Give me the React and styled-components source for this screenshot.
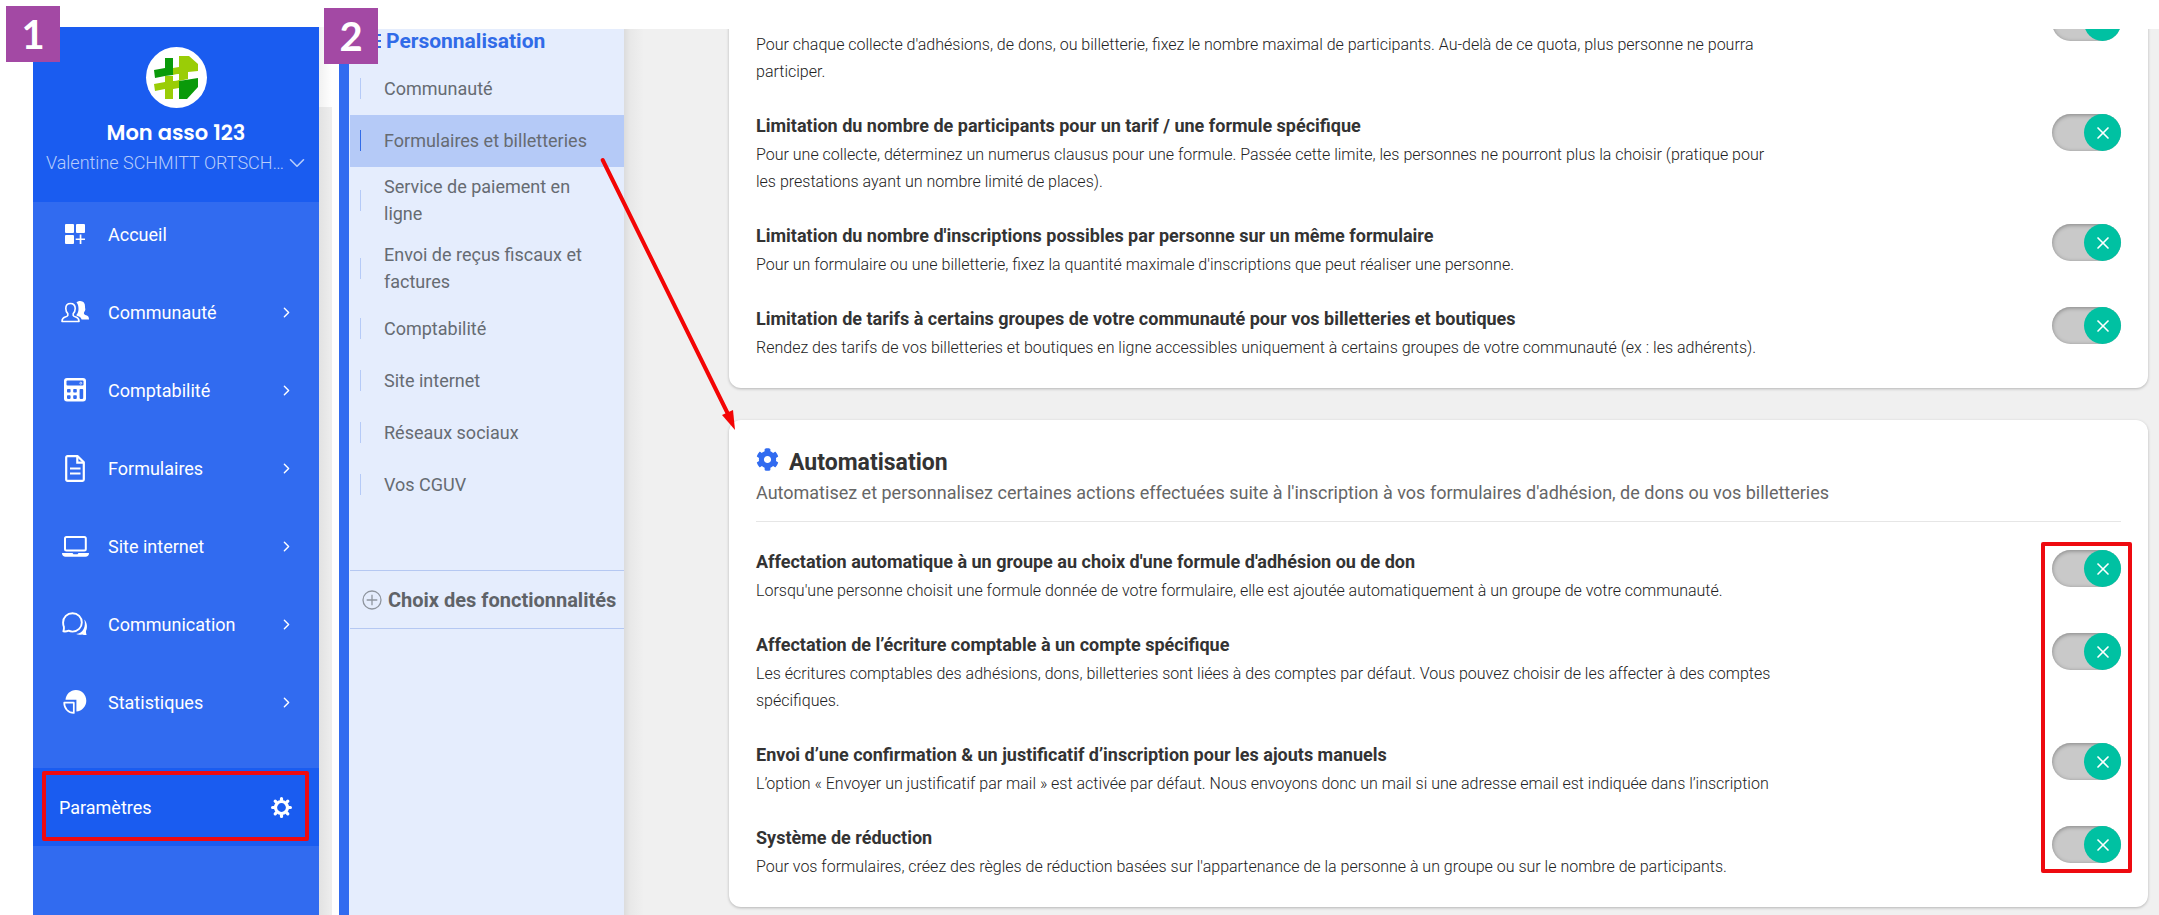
import { useState } from "react";
import styled, { createGlobalStyle } from "styled-components";
import { FaCog } from "react-icons/fa";
import { ChevronDown, ChevronRight, X } from "lucide-react";

const GlobalStyle = createGlobalStyle`
  * {
    box-sizing: border-box;
  }

  body {
    margin: 0;
    background: #fff;
    font-family: Roboto, "Liberation Sans", sans-serif;
    color: #333;
  }

  h1, h2, h3, p, ul {
    margin: 0;
    padding: 0;
  }

  button {
    border: 0;
    background: none;
    font-family: inherit;
    cursor: pointer;
  }
`;

const Page = styled.div`
  position: relative;
  display: flex;
  height: 100vh;
  padding-left: 33px;
  overflow: hidden;
`;

const StepBadge = styled.div`
  position: absolute;
  z-index: 3;
  top: ${(props) => props.$top}px;
  left: ${(props) => props.$left}px;
  display: flex;
  align-items: center;
  justify-content: center;
  width: 54px;
  height: 56px;
  background: #a349a4;
  color: #fff;
  font-family: Lato, "Noto Sans", sans-serif;
  font-size: 40px;
  font-weight: 700;
  line-height: 56px;
`;

const ArrowDrawing = styled.svg`
  position: absolute;
  z-index: 3;
  top: 150px;
  left: 590px;
  pointer-events: none;
`;

/* main menu */

const Sidebar = styled.nav`
  flex: none;
  width: 286px;
  margin-top: 27px;
  background: #316bf0;
`;

const SidebarHeader = styled.header`
  display: flex;
  flex-direction: column;
  align-items: center;
  padding: 20px 12px 25px;
  background: #1a5cf0;
`;

const Avatar = styled.div`
  display: flex;
  width: 61px;
  height: 61px;
  border-radius: 50%;
  background: #fff;
`;

const AssoName = styled.h1`
  margin-top: 10px;
  color: #fff;
  font-family: Poppins, Inter, sans-serif;
  font-size: 21px;
  font-weight: 600;
  line-height: 30px;
`;

const UserButton = styled.button`
  display: flex;
  align-items: center;
  padding: 0 0 0 4px;
  color: #b8cdfb;
  font-size: 18px;
  font-weight: 300;
  line-height: 29px;
  white-space: nowrap;
`;

const MenuList = styled.ul`
  display: flex;
  flex-direction: column;
  gap: 14px;
  list-style: none;
`;

const MenuLink = styled.a`
  display: flex;
  align-items: center;
  height: 64px;
  padding: 0 24px 0 26px;
  color: #fff;
  font-size: 18px;
  text-decoration: none;
`;

const MenuIcon = styled.span`
  display: flex;
  align-items: center;
  justify-content: center;
  width: 32px;
  margin-right: 17px;
`;

const MenuLabel = styled.span`
  flex: 1;
`;

const SettingsLink = styled.a`
  position: relative;
  display: flex;
  align-items: center;
  justify-content: space-between;
  height: 78px;
  margin-top: 34px;
  padding: 0 27px 0 26px;
  background: #1a5cf0;
  color: #fff;
  font-size: 18px;
  text-decoration: none;
`;

const SettingsFrame = styled.span`
  position: absolute;
  top: 3px;
  right: 10px;
  bottom: 5px;
  left: 9px;
  border: 4px solid #ee0a10;
  border-radius: 2px;
`;

const PageEdge = styled.div`
  display: flex;
  flex: none;
  flex-direction: column;
  width: 13px;
  margin: 27px 7px 0 0;
  background: linear-gradient(to right, #e2e2e2, #eee);
`;

const PageEdgeTop = styled.div`
  height: 80px;
  background: linear-gradient(to right, #f1f1f1, #fff);
`;

/* settings screen */

const Settings = styled.div`
  display: flex;
  flex: 1;
  min-width: 0;
  margin-top: 29px;
  border-left: 10px solid #316bf0;
  background: #f0f0f0;
`;

const Submenu = styled.nav`
  flex: none;
  width: 275px;
  background: #e5edfd;
`;

const SubmenuTitle = styled.h2`
  display: flex;
  align-items: center;
  gap: 5px;
  margin-bottom: 10px;
  padding-left: 12px;
  color: #316be8;
  font-size: 21px;
  font-weight: 700;
  line-height: 24px;
`;

const SubmenuList = styled.ul`
  list-style: none;
`;

const SubmenuLink = styled.a`
  display: flex;
  align-items: center;
  min-height: 52px;
  margin-left: 1px;
  padding: 6px 24px 8px 10px;
  background: ${(props) => (props.$active ? "#b5caf7" : "transparent")};
  color: #666b72;
  font-size: 18px;
  line-height: 27px;
  text-decoration: none;

  &::before {
    content: "";
    flex: none;
    width: 1px;
    height: 21px;
    margin-right: 23px;
    background: ${(props) => (props.$active ? "#316be8" : "#b5caf7")};
  }
`;

const FeaturesLink = styled.a`
  display: flex;
  align-items: center;
  gap: 6px;
  height: 59px;
  margin: 59px 0 0 1px;
  padding-left: 12px;
  border-top: 1px solid #b5c8f2;
  border-bottom: 1px solid #b5c8f2;
  color: #5f6368;
  font-size: 20px;
  font-weight: 700;
  text-decoration: none;
  white-space: nowrap;
`;

const Content = styled.main`
  display: flex;
  flex: 1;
  flex-direction: column;
  justify-content: flex-end;
  gap: 32px;
  min-width: 0;
  padding: 0 11px 8px 105px;
  overflow: hidden;
  background: linear-gradient(to right, #dcdcdc, #e8e8e8 6px, #f0f0f0 20px);
`;

const Card = styled.section`
  flex: none;
  padding: 28px 27px 27px;
  border-radius: 12px;
  background: #fff;
  box-shadow: 0 1px 3px rgba(0, 0, 0, 0.25);
`;

const CardHeader = styled.header`
  margin-bottom: 26px;
  padding-bottom: 14px;
  border-bottom: 1px solid #e6e6e6;
`;

const CardTitle = styled.h2`
  display: flex;
  align-items: flex-start;
  gap: 10px;
  font-size: 23px;
  font-weight: 700;
  line-height: 30px;

  svg {
    color: #316bf0;
  }
`;

const CardIntro = styled.p`
  margin-top: 1px;
  color: #666;
  font-size: 18px;
  line-height: 28px;
`;

const OptionList = styled.div`
  position: relative;
  display: flex;
  flex-direction: column;
  gap: 27px;
`;

const OptionFrame = styled.div`
  position: absolute;
  top: -6px;
  right: -11px;
  bottom: 7px;
  width: 91px;
  border: 4px solid #ee0a10;
  border-radius: 2px;
  pointer-events: none;
`;

const OptionRow = styled.div`
  display: flex;
  align-items: flex-start;
  justify-content: space-between;
`;

const OptionText = styled.div`
  width: 75%;
  padding-top: ${(props) => (props.$untitled ? "28px" : "0")};
`;

const OptionTitle = styled.label`
  display: block;
  font-size: 18px;
  font-weight: 700;
  line-height: 28px;
`;

const OptionDescription = styled.p`
  margin-top: 1px;
  color: #222;
  font-size: 16px;
  font-weight: 300;
  line-height: 27px;
`;

const Toggle = styled.span`
  position: relative;
  display: flex;
  width: 69px;
  height: 37px;
  margin-top: 2px;
`;

const ToggleInput = styled.input`
  appearance: none;
  width: 100%;
  height: 100%;
  margin: 0;
  border-radius: 19px;
  background: #c9c9c9;
  box-shadow: inset 0 1px 4px rgba(0, 0, 0, 0.35);
  cursor: pointer;
`;

const ToggleKnob = styled.span`
  position: absolute;
  top: 0;
  left: ${(props) => (props.$on ? "32px" : "0")};
  display: flex;
  align-items: center;
  justify-content: center;
  width: 37px;
  height: 37px;
  border-radius: 50%;
  background: #00c1a2;
  color: #fff;
  pointer-events: none;
`;

const LogoDrawing = () => (
  <svg width="61" height="61" viewBox="0 0 61 61" aria-hidden="true">
    <path fill="#9acd06" d="M8 37l11-2v-6h8v5l6-1v-6l-6 1v-7l6-1V9h10l9 8v7l-10 1v7l-9 2v7l-6 1v10h-8V42l-10 2z" />
    <path fill="#0a9a0a" d="M19 11h8v17l-8 1-10 2-1-8 11-2z" />
    <path fill="#fff" d="M27 28l6-1v6l-6 1z" />
    <path fill="#0a9a0a" d="M33 34l19-3v9L41 52h-8z" />
  </svg>
);

const HomeIcon = () => (
  <svg width="20" height="20" viewBox="0 0 20 20" fill="#fff">
    <rect width="9" height="9" rx="1" />
    <rect x="11" width="9" height="9" rx="1" />
    <rect y="11" width="9" height="9" rx="1" />
    <path d="M14.7 10.5h1.7v4h4v1.6h-4v4h-1.7v-4h-4v-1.6h4z" />
  </svg>
);

const PeopleIcon = () => (
  <svg width="28" height="22" viewBox="0 0 28 22">
    <path
      fill="none"
      stroke="#fff"
      strokeWidth="1.6"
      strokeLinejoin="round"
      d="M9.500 2.500C6.500 2.500 4.800 4.600 4.800 7.400c0 2.300.8 4 2 5.200v1.900c-.4.900-1.500 1.200-2.700 1.600C2 16.800 1 17.600 1 20.500h17c0-2.900-1-3.700-3.100-4.400-1.200-.4-2.300-.7-2.700-1.600v-1.900c1.200-1.200 2-2.900 2-5.200 0-2.800-1.700-4.900-4.700-4.900z"
    />
    <path
      fill="#fff"
      d="M15.500 1.500C16.500.6 17.800 0 19.300.1c3.200.2 4.800 2.300 4.700 5.100-.1 2.300.8 2.700.1 4.400-.4 1-1.200 1.700-1.200 2.700 0 1.300 1.100 1.600 2.200 2 1.900.7 2.900 1.300 2.900 4.200h-7.400c-.4-1.700-1.500-2.700-3.300-3.300-1.400-.4-2-.8-2-1.200 1.500-1.600 2.200-3.600 2.200-6 0-2.800-.5-5-2-6.500z"
    />
  </svg>
);

const CalculatorIcon = () => (
  <svg width="22" height="24" viewBox="0 0 22 24">
    <rect width="22" height="23.500" rx="3" fill="#fff" />
    <g fill="#316bf0">
      <rect x="2.500" y="2.500" width="17" height="5" rx="1" />
      <rect x="3" y="11" width="3.600" height="3.600" rx=".8" />
      <rect x="9.200" y="11" width="3.600" height="3.600" rx=".8" />
      <rect x="3" y="17.300" width="3.600" height="3.600" rx=".8" />
      <rect x="9.200" y="17.300" width="3.600" height="3.600" rx=".8" />
      <rect x="15.600" y="11" width="3.600" height="9.900" rx=".8" />
    </g>
    <circle cx="16.800" cy="5.200" r="1" fill="none" stroke="#fff" strokeWidth=".7" />
  </svg>
);

const FileIcon = () => (
  <svg width="20" height="27" viewBox="0 0 20 27" fill="none" stroke="#fff" strokeWidth="2.200">
    <path strokeLinejoin="round" d="M1.200 2.500c0-.8.500-1.300 1.300-1.300h10.200l6.100 6.100v17.200c0 .8-.5 1.300-1.300 1.300h-15c-.8 0-1.300-.5-1.300-1.300z" />
    <path d="M12.300 1v6.700h6.500M5 13.500h10.500M5 18.500h10.500" />
  </svg>
);

const LaptopIcon = () => (
  <svg width="27" height="21" viewBox="0 0 27 21">
    <rect x="3" y="1" width="20.800" height="13.500" rx="1.500" fill="none" stroke="#fff" strokeWidth="2" />
    <path fill="#fff" d="M0 17h10.500l1 1.300h4l1-1.300H27c0 2.500-1.500 3.800-3.500 3.800h-20C1.500 20.800 0 19.500 0 17z" />
  </svg>
);

const ChatIcon = () => (
  <svg width="26" height="24" viewBox="0 0 26 24">
    <path
      fill="none"
      stroke="#fff"
      strokeWidth="1.900"
      strokeLinejoin="round"
      d="M10.500 1.200c5.300 0 9.300 4.100 9.300 9.200s-4 9.200-9.300 9.200c-1.900 0-3-.4-3.900-.9-1.500.7-3.200 1-5.200.7.500-1.600.7-2.800.5-4.500-.5-1.300-.8-2.600-.8-4.500 0-5.100 4.100-9.200 9.400-9.200z"
    />
    <path fill="#fff" d="M22.300 7.500c3 3.300 3.300 8 1.700 11.500-.1 1.500.1 2.700.6 4.100-1.700.1-3-.1-4.500-.7-2 .6-4 .6-6-.3 3.500-.4 6.100-2.200 7.500-5 1.400-2.900 1.700-6 .7-9.600z" />
  </svg>
);

const StatsIcon = () => (
  <svg width="24" height="24" viewBox="0 0 24 24">
    <path fill="#fff" d="M2.500 9.800C3 4.300 7.300 0 12.900 0 18.700 0 23.300 4.700 23.300 10.800c0 5.700-4.300 10.300-9.900 10.800V9.800z" />
    <path fill="none" stroke="#fff" strokeWidth="1.700" strokeLinejoin="round" d="M1.200 12.700h9.600v10.200c-5.400 0-9.600-4.400-9.600-10.200z" />
  </svg>
);

const SettingsIcon = () => (
  <svg width="21" height="21" viewBox="0 0 21 21" stroke="#fff" fill="none">
    <circle cx="10.500" cy="10.500" r="6" strokeWidth="3.200" />
    <g strokeWidth="3.200" strokeLinecap="round">
      <path d="M10.500 1.600v2M10.500 17.400v2M1.600 10.500h2M17.400 10.500h2M4.200 4.200l1 1M15.800 15.800l1 1M4.200 16.800l1-1M15.800 5.200l1-1" />
    </g>
  </svg>
);

const ListIcon = () => (
  <svg width="20" height="18" viewBox="0 0 20 18" fill="#316be8">
    <path d="M0 1h3v3H0zM6 2h14v2H6zM0 7h3v3H0zM6 8h14v2H6zM0 13h3v3H0zM6 14h14v2H6z" />
  </svg>
);

const PlusIcon = () => (
  <svg width="20" height="20" viewBox="0 0 20 20" fill="none" stroke="#8f959e" strokeWidth="1.300">
    <circle cx="10" cy="10" r="9" />
    <path d="M10 4.700v10.600M4.700 10h10.600" />
  </svg>
);

const menuItems = [
  { label: "Accueil", icon: <HomeIcon /> },
  { label: "Communauté", icon: <PeopleIcon />, more: true },
  { label: "Comptabilité", icon: <CalculatorIcon />, more: true },
  { label: "Formulaires", icon: <FileIcon />, more: true },
  { label: "Site internet", icon: <LaptopIcon />, more: true },
  { label: "Communication", icon: <ChatIcon />, more: true },
  { label: "Statistiques", icon: <StatsIcon />, more: true },
];

const submenuItems = [
  "Communauté",
  "Formulaires et billetteries",
  "Service de paiement en ligne",
  "Envoi de reçus fiscaux et factures",
  "Comptabilité",
  "Site internet",
  "Réseaux sociaux",
  "Vos CGUV",
];

const limitOptions = [
  {
    id: "quota",
    text: "Pour chaque collecte d'adhésions, de dons, ou billetterie, fixez le nombre maximal de participants. Au-delà de ce quota, plus personne ne pourra participer.",
  },
  {
    id: "quota-tarif",
    title: "Limitation du nombre de participants pour un tarif / une formule spécifique",
    text: "Pour une collecte, déterminez un numerus clausus pour une formule. Passée cette limite, les personnes ne pourront plus la choisir (pratique pour les prestations ayant un nombre limité de places).",
  },
  {
    id: "quota-personne",
    title: "Limitation du nombre d'inscriptions possibles par personne sur un même formulaire",
    text: "Pour un formulaire ou une billetterie, fixez la quantité maximale d'inscriptions que peut réaliser une personne.",
  },
  {
    id: "tarif-groupe",
    title: "Limitation de tarifs à certains groupes de votre communauté pour vos billetteries et boutiques",
    text: "Rendez des tarifs de vos billetteries et boutiques en ligne accessibles uniquement à certains groupes de votre communauté (ex : les adhérents).",
  },
];

const automationOptions = [
  {
    id: "auto-groupe",
    title: "Affectation automatique à un groupe au choix d'une formule d'adhésion ou de don",
    text: "Lorsqu'une personne choisit une formule donnée de votre formulaire, elle est ajoutée automatiquement à un groupe de votre communauté.",
  },
  {
    id: "auto-compte",
    title: "Affectation de l’écriture comptable à un compte spécifique",
    text: "Les écritures comptables des adhésions, dons, billetteries sont liées à des comptes par défaut. Vous pouvez choisir de les affecter à des comptes spécifiques.",
  },
  {
    id: "auto-mail",
    title: "Envoi d’une confirmation & un justificatif d’inscription pour les ajouts manuels",
    text: "L’option « Envoyer un justificatif par mail » est activée par défaut. Nous envoyons donc un mail si une adresse email est indiquée dans l’inscription",
  },
  {
    id: "auto-reduction",
    title: "Système de réduction",
    text: "Pour vos formulaires, créez des règles de réduction basées sur l'appartenance de la personne à un groupe ou sur le nombre de participants.",
  },
];

function Option({ id, title, text }) {
  const [on, setOn] = useState(true);

  return (
    <OptionRow>
      <OptionText $untitled={!title}>
        {title && <OptionTitle htmlFor={id}>{title}</OptionTitle>}
        <OptionDescription id={`${id}-text`}>{text}</OptionDescription>
      </OptionText>
      <Toggle>
        <ToggleInput
          type="checkbox"
          id={id}
          aria-labelledby={title ? undefined : `${id}-text`}
          checked={on}
          onChange={() => setOn(!on)}
        />
        <ToggleKnob $on={on}>
          <X size={20} strokeWidth={2} />
        </ToggleKnob>
      </Toggle>
    </OptionRow>
  );
}

function App() {
  return (
    <Page>
      <GlobalStyle />

      <Sidebar>
        <SidebarHeader>
          <Avatar>
            <LogoDrawing />
          </Avatar>
          <AssoName>Mon asso 123</AssoName>
          <UserButton type="button">
            Valentine SCHMITT ORTSCH…
            <ChevronDown size={26} strokeWidth={1.500} />
          </UserButton>
        </SidebarHeader>
        <MenuList>
          {menuItems.map((item) => (
            <li key={item.label}>
              <MenuLink href="#">
                <MenuIcon>{item.icon}</MenuIcon>
                <MenuLabel>{item.label}</MenuLabel>
                {item.more && <ChevronRight size={17} strokeWidth={2} />}
              </MenuLink>
            </li>
          ))}
        </MenuList>
        <SettingsLink href="#">
          Paramètres
          <SettingsIcon />
          <SettingsFrame />
        </SettingsLink>
      </Sidebar>

      <PageEdge>
        <PageEdgeTop />
      </PageEdge>

      <Settings>
        <Submenu>
          <SubmenuTitle>
            <ListIcon />
            Personnalisation
          </SubmenuTitle>
          <SubmenuList>
            {submenuItems.map((label, index) => (
              <li key={label}>
                <SubmenuLink href="#" $active={index === 1}>
                  {label}
                </SubmenuLink>
              </li>
            ))}
          </SubmenuList>
          <FeaturesLink href="#">
            <PlusIcon />
            Choix des fonctionnalités
          </FeaturesLink>
        </Submenu>

        <Content>
          <Card>
            <OptionList>
              {limitOptions.map((option) => (
                <Option key={option.id} {...option} />
              ))}
            </OptionList>
          </Card>

          <Card>
            <CardHeader>
              <CardTitle>
                <FaCog size={23} />
                Automatisation
              </CardTitle>
              <CardIntro>
                Automatisez et personnalisez certaines actions effectuées suite
                à l'inscription à vos formulaires d'adhésion, de dons ou vos
                billetteries
              </CardIntro>
            </CardHeader>
            <OptionList>
              {automationOptions.map((option) => (
                <Option key={option.id} {...option} />
              ))}
              <OptionFrame />
            </OptionList>
          </Card>
        </Content>
      </Settings>

      <StepBadge $top={6} $left={6}>1</StepBadge>
      <StepBadge $top={8} $left={324}>2</StepBadge>
      <ArrowDrawing width="160" height="290" viewBox="0 0 160 290" aria-hidden="true">
        <path d="M12.700 10L138 264" stroke="#f30505" strokeWidth="4" strokeLinecap="round" />
        <path d="M145 280l-13-15 11-5z" fill="#f30505" />
      </ArrowDrawing>
    </Page>
  );
}

export default App;
